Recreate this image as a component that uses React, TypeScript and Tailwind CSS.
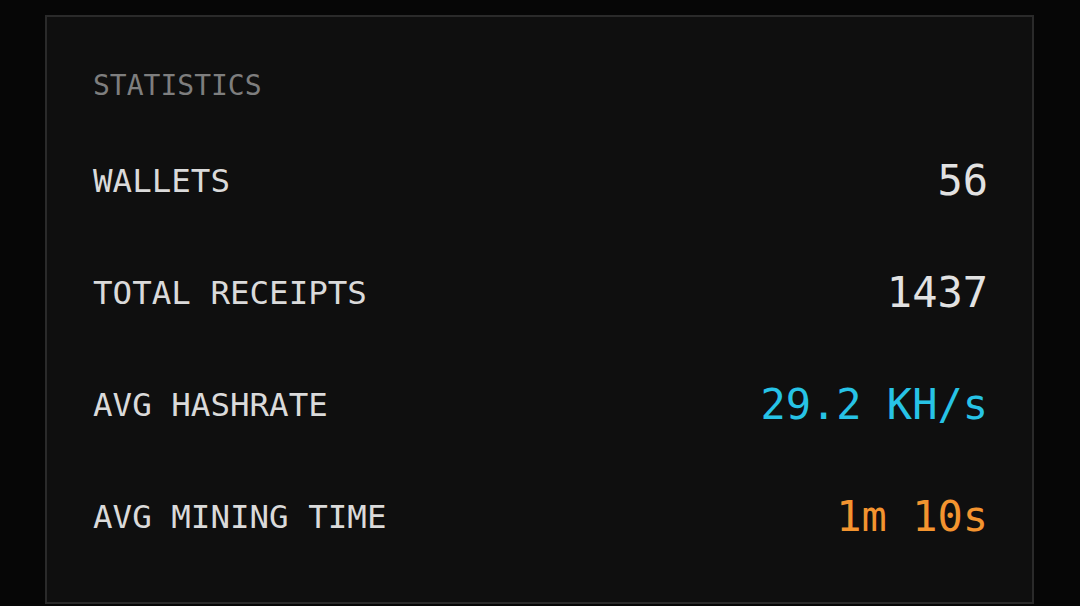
const stats = [
  { label: "WALLETS", value: "56", color: "text-[#e2e2e2]" },
  { label: "TOTAL RECEIPTS", value: "1437", color: "text-[#e2e2e2]" },
  { label: "AVG HASHRATE", value: "29.2 KH/s", color: "text-[#27c3e6]" },
  { label: "AVG MINING TIME", value: "1m 10s", color: "text-[#f3942f]" },
];

export default function App() {
  return (
    <div className="min-h-[606px] w-[1080px] bg-[#060606] pt-[15px] pl-[45px] font-['DejaVu_Sans_Mono',monospace]">
      <div className="w-[989px] border-2 border-[#2a2a2a] bg-[#0f0f0f] pt-[55px] pb-[29px] pl-[46px] pr-[44px]">
        <h2 className="mb-[25px] h-[28px] text-[28px] leading-[28px] text-[#7e7e7e]">STATISTICS</h2>
        {stats.map((s) => (
          <div key={s.label} className="flex h-[112px] items-center justify-between">
            <span className="text-[32.5px] leading-none text-[#dadada]">{s.label}</span>
            <span className={`text-[42px] leading-none ${s.color}`}>{s.value}</span>
          </div>
        ))}
      </div>
    </div>
  );
}
